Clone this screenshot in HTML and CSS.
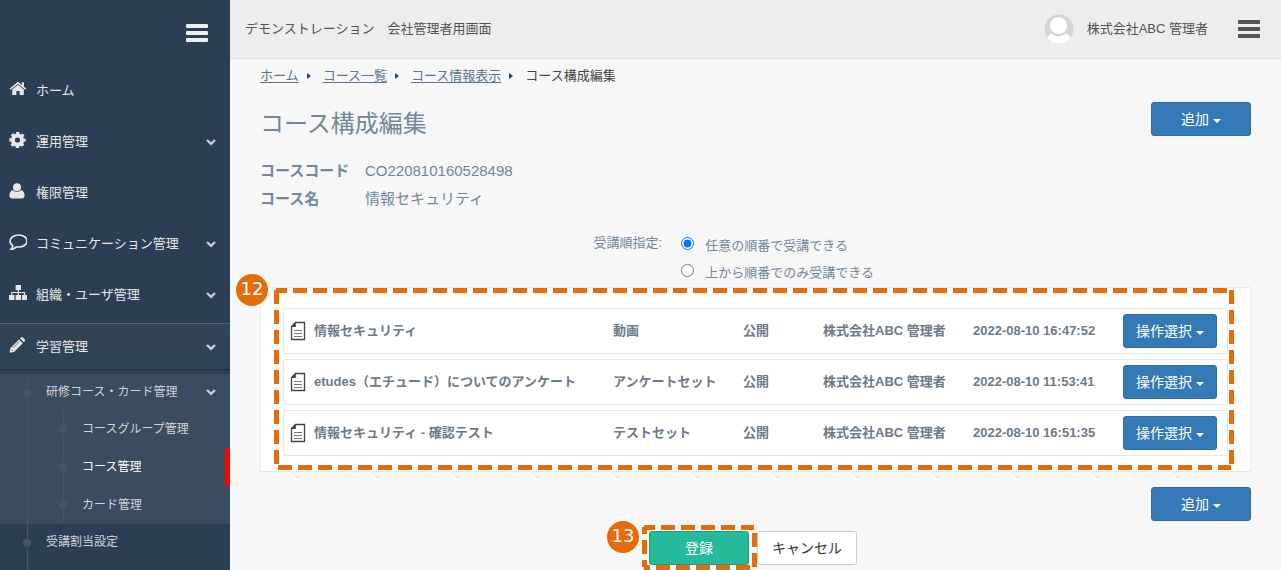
FILE: index.html
```html
<!doctype html>
<html lang="ja">
    <head>
        <meta charset="utf-8">
        <meta name="viewport" content="width=device-width, initial-scale=1">
        <title>コース構成編集</title>
        <link rel="stylesheet" href="styles.css">
    </head>
    <body>
        <svg class="defs" aria-hidden="true">
            <symbol id="chevron" viewBox="0 0 10 8"><path d="M1 2 L5 5.8 L9 2" fill="none" stroke="currentColor" stroke-width="2.4"/></symbol>
            <symbol id="doc" viewBox="0 0 16 20">
                <path d="M5.5 1.5 H14.5 V18.5 H1.5 V5.5 Z" fill="#fff" stroke="#444" stroke-width="1.3"/>
                <path d="M1 6 L5.8 1 V6 Z" fill="#444"/>
                <path d="M4 9.5 H12 M4 12.5 H12 M4 15.5 H12" stroke="#777" stroke-width="1"/>
            </symbol>
        </svg>

        <nav class="sidebar">
            <div class="sidebar-top">
                <button class="bars" type="button" aria-label="メニュー"><span></span><span></span><span></span></button>
            </div>
            <ul class="menu">
                <li>
                    <a href="#">
                        <svg class="icon" viewBox="0 0 18 16"><path d="M9 3.8 L14.8 8.6 V13.5 Q14.8 14 14.3 14 H10.6 V10 H7.4 V14 H3.7 Q3.2 14 3.2 13.5 V8.6 Z" fill="currentColor"/><path d="M1.2 8.2 L9 1.8 L16.8 8.2" fill="none" stroke="currentColor" stroke-width="1.5"/><path d="M12.8 1.2 H15 V6.5 L12.8 4.6 Z" fill="currentColor"/></svg>
                        ホーム
                    </a>
                </li>
                <li>
                    <a href="#">
                        <svg class="icon" viewBox="0 0 18 16"><circle cx="8.5" cy="8" r="4.6" fill="none" stroke="currentColor" stroke-width="4"/><circle cx="8.5" cy="8" r="7" fill="none" stroke="currentColor" stroke-width="2.4" stroke-dasharray="3.2 2.3" stroke-dashoffset="1.6"/></svg>
                        運用管理
                        <svg class="chevron"><use href="#chevron"/></svg>
                    </a>
                </li>
                <li>
                    <a href="#">
                        <svg class="icon" viewBox="0 0 18 16"><circle cx="8" cy="4.2" r="4" fill="currentColor"/><path d="M4 7.2 Q8 10.6 12 7.2 Q15.6 7.8 15.6 12.6 Q15.6 15.4 13 15.4 H3 Q.4 15.4 .4 12.6 Q.4 7.8 4 7.2 Z" fill="currentColor"/></svg>
                        権限管理
                    </a>
                </li>
                <li>
                    <a href="#">
                        <svg class="icon" viewBox="0 0 18 16"><path d="M9.8 1 C14.6 1 18 3.6 18 7 C18 10.4 14.6 13 9.8 13 Q8.6 13 7.6 12.8 Q5.4 15 2 15.4 Q3.7 13.8 3.9 11.6 Q1 9.8 1 7 C1 3.6 5 1 9.8 1 Z" fill="none" stroke="currentColor" stroke-width="1.7"/></svg>
                        コミュニケーション管理
                        <svg class="chevron"><use href="#chevron"/></svg>
                    </a>
                </li>
                <li>
                    <a href="#">
                        <svg class="icon" viewBox="0 0 18 16"><path d="M6.6 0 H12 V5 H6.6 Z M0 10 H5.4 V15 H0 Z M6.6 10 H12 V15 H6.6 Z M13 10 H18 V15 H13 Z" fill="currentColor"/><path d="M9.3 5 V10 M2.7 10 V7.5 H15.5 V10" fill="none" stroke="currentColor" stroke-width="1.2"/></svg>
                        組織・ユーザ管理
                        <svg class="chevron"><use href="#chevron"/></svg>
                    </a>
                </li>
                <li class="active">
                    <a href="#">
                        <svg class="icon" viewBox="0 0 18 16"><path d="M10 2.4 L13.8 6.2 L5 15 L.6 15.8 L1.2 11.2 Z M11 1.4 L12 .5 Q13 -.3 14 .6 L15.6 2.2 Q16.5 3.2 15.7 4.2 L14.8 5.2 Z" fill="currentColor"/><path d="M2 12.4 L3.8 14.2 M4 10.8 L10.4 4.4" stroke="#2f4457" stroke-width=".7"/></svg>
                        学習管理
                        <svg class="chevron"><use href="#chevron"/></svg>
                    </a>
                    <ul class="sub-menu">
                        <li class="open">
                            <a href="#">研修コース・カード管理 <svg class="chevron"><use href="#chevron"/></svg></a>
                            <ul class="sub-menu nested">
                                <li><a href="#">コースグループ管理</a></li>
                                <li class="current"><a href="#">コース管理</a></li>
                                <li><a href="#">カード管理</a></li>
                            </ul>
                        </li>
                        <li><a href="#">受講割当設定</a></li>
                    </ul>
                </li>
            </ul>
        </nav>

        <div class="page">
            <header class="top-nav">
                <span>デモンストレーション　会社管理者用画面</span>
                <div class="user">
                    <svg class="avatar" viewBox="0 0 30 30">
                        <clipPath id="round"><circle cx="15" cy="15" r="14.5"/></clipPath>
                        <g clip-path="url(#round)">
                            <path d="M0 0 H30 V30 H0 Z" fill="#d5d5d5"/>
                            <circle cx="14.5" cy="11.5" r="8.6" fill="#fff"/>
                            <path d="M2 30 Q3 21 7 19.6 Q14.5 25 22 19.6 Q27 21 28 30 Z" fill="#fff"/>
                        </g>
                    </svg>
                    <span>株式会社ABC 管理者</span>
                    <button class="bars dark" type="button" aria-label="ユーザメニュー"><span></span><span></span><span></span></button>
                </div>
            </header>

            <main class="content">
                <ol class="breadcrumb">
                    <li><a href="#">ホーム</a></li>
                    <li><a href="#">コース一覧</a></li>
                    <li><a href="#">コース情報表示</a></li>
                    <li>コース構成編集</li>
                </ol>

                <div class="title-row">
                    <h1>コース構成編集</h1>
                    <button class="btn btn-primary" type="button">追加 <i class="caret"></i></button>
                </div>

                <dl class="course-info">
                    <dt>コースコード</dt><dd>CO220810160528498</dd>
                    <dt>コース名</dt><dd>情報セキュリティ</dd>
                </dl>

                <form>
                    <div class="order" role="radiogroup" aria-labelledby="order-label">
                        <span id="order-label" class="order-label">受講順指定:</span>
                        <div class="order-options">
                            <div><input type="radio" name="order" id="order-any" checked><label for="order-any">任意の順番で受講できる</label></div>
                            <div><input type="radio" name="order" id="order-top"><label for="order-top">上から順番でのみ受講できる</label></div>
                        </div>
                    </div>

                    <div class="panel">
                        <table>
                            <colgroup>
                                <col>
                                <col class="col-type">
                                <col class="col-status">
                                <col class="col-person">
                                <col class="col-date">
                                <col class="col-action">
                            </colgroup>
                            <tbody>
                                <tr>
                                    <td><div class="name"><svg class="doc"><use href="#doc"/></svg>情報セキュリティ</div></td>
                                    <td>動画</td>
                                    <td>公開</td>
                                    <td>株式会社ABC 管理者</td>
                                    <td>2022-08-10 16:47:52</td>
                                    <td><button class="btn btn-primary btn-row" type="button">操作選択 <i class="caret"></i></button></td>
                                </tr>
                                <tr>
                                    <td><div class="name"><svg class="doc"><use href="#doc"/></svg>etudes（エチュード）についてのアンケート</div></td>
                                    <td>アンケートセット</td>
                                    <td>公開</td>
                                    <td>株式会社ABC 管理者</td>
                                    <td>2022-08-10 11:53:41</td>
                                    <td><button class="btn btn-primary btn-row" type="button">操作選択 <i class="caret"></i></button></td>
                                </tr>
                                <tr>
                                    <td><div class="name"><svg class="doc"><use href="#doc"/></svg>情報セキュリティ - 確認テスト</div></td>
                                    <td>テストセット</td>
                                    <td>公開</td>
                                    <td>株式会社ABC 管理者</td>
                                    <td>2022-08-10 16:51:35</td>
                                    <td><button class="btn btn-primary btn-row" type="button">操作選択 <i class="caret"></i></button></td>
                                </tr>
                            </tbody>
                        </table>
                        <div class="frame frame-list">
                            <svg>
                                <line x1="0" y1="0" x2="100%" y2="0" stroke-dashoffset="3"/>
                                <line x1="0" y1="0" x2="0" y2="100%"/>
                                <line x1="100%" y1="0" x2="100%" y2="100%"/>
                                <line x1="0" y1="100%" x2="100%" y2="100%" stroke-dashoffset="18"/>
                            </svg>
                            <span class="step">12</span>
                        </div>
                    </div>

                    <div class="add-row">
                        <button class="btn btn-primary" type="button">追加 <i class="caret"></i></button>
                    </div>

                    <div class="actions">
                        <div class="submit">
                            <button class="btn btn-success" type="submit">登録</button>
                            <div class="frame frame-submit">
                                <svg>
                                    <line x1="0" y1="0" x2="100%" y2="0" stroke-dashoffset="3"/>
                                    <line x1="0" y1="0" x2="0" y2="100%" stroke-dashoffset="7"/>
                                    <line x1="100%" y1="0" x2="100%" y2="100%" stroke-dashoffset="14"/>
                                    <line x1="0" y1="100%" x2="100%" y2="100%" stroke-dashoffset="8"/>
                                </svg>
                                <span class="step">13</span>
                            </div>
                        </div>
                        <button class="btn btn-default" type="button">キャンセル</button>
                    </div>
                </form>
            </main>
        </div>
    </body>
</html>
```

FILE: styles.css
```css
:root {
  --navy: #2a3f54;
  --line: #425668;
  --text: #73879c;
  --mark: #e46c0a;
}

* {
  margin: 0;
  padding: 0;
  box-sizing: border-box;
}

body {
  display: flex;
  min-height: 100vh;
  font: 13px/20px "Liberation Sans", "Noto Sans CJK JP", sans-serif;
  color: var(--text);
  background: #f7f7f7;
}

ul,
ol {
  list-style: none;
}

button {
  font-family: inherit;
  cursor: pointer;
}

.defs {
  position: absolute;
  width: 0;
  height: 0;
}

/* sidebar */
.sidebar {
  display: flex;
  flex-direction: column;
  flex: 0 0 230px;
  background: var(--navy);
}

.sidebar-top {
  display: flex;
  justify-content: flex-end;
  padding: 24px 22px 26px 0;
}

.bars {
  display: flex;
  flex-direction: column;
  gap: 3px;
  width: 22px;
  border: 0;
  background: none;
  color: #ecf0f1;
}

.bars span {
  height: 4px;
  width: 100%;
  border-radius: 1px;
  background: currentColor;
}

.bars.dark {
  color: #515356;
}

.menu {
  display: flex;
  flex-direction: column;
  flex: 1;
}

.menu a {
  display: flex;
  align-items: center;
  color: #e7e7e7;
  text-decoration: none;
}

.menu > li {
  margin-bottom: 6px;
}

.menu > li > a {
  height: 45px;
  padding: 0 14px 0 9px;
}

.menu > li.active {
  display: flex;
  flex-direction: column;
  flex: 1;
  margin-bottom: 0;
}

.menu > li.active > a {
  flex: none;
  height: 47px;
  border-top: 1px solid #566676;
  border-bottom: 1px solid #20303f;
  background: linear-gradient(#334556, #2c4257);
}

.icon {
  width: 18px;
  height: 16px;
  margin: 0 9px 4px 0;
}

.chevron {
  width: 10px;
  height: 8px;
  margin-left: auto;
  color: #c4cfda;
}

.sub-menu {
  position: relative;
  flex: 1;
  margin-top: 4px;
}

.sub-menu a {
  position: relative;
  height: 36px;
  padding: 0 14px 0 46px;
  font-size: 12px;
  color: #d0d4d8;
}

.sub-menu::before {
  content: "";
  position: absolute;
  top: 0;
  bottom: 0;
  left: 27px;
  width: 1px;
  background: var(--line);
}

.sub-menu a::before {
  content: "";
  position: absolute;
  left: 23px;
  top: 15px;
  width: 8px;
  height: 8px;
  border-radius: 50%;
  background: var(--line);
}

.sub-menu .open {
  background: #3a4c5f;
}

.nested {
  margin-top: 0;
}

.nested::before {
  left: 63px;
}

.sub-menu .nested a {
  height: 38px;
  padding-left: 82px;
}

.sub-menu .nested a::before {
  left: 59px;
}

.nested .current a {
  color: #fff;
  border-right: 5px solid #f00;
}

/* top bar */
.page {
  flex: 1;
  min-width: 0;
}

.top-nav {
  display: flex;
  justify-content: space-between;
  align-items: center;
  height: 59px;
  padding: 0 21px 0 15px;
  color: #515356;
  background: #ededed;
  border-bottom: 1px solid #d9dee4;
}

.user {
  display: flex;
  align-items: center;
}

.avatar {
  width: 30px;
  height: 30px;
  margin-right: 13px;
}

.user .bars {
  margin-left: 30px;
}

/* content */
.content {
  padding: 7px 30px 5px;
}

.breadcrumb {
  display: flex;
  color: #444;
}

.breadcrumb a {
  color: #5a738e;
  text-underline-offset: 2px;
}

.breadcrumb li + li::before {
  content: "";
  display: inline-block;
  margin: 0 12px 1px 8px;
  border: 3px solid transparent;
  border-left: 4px solid #1a4480;
  border-right: 0;
}

.title-row {
  display: flex;
  justify-content: space-between;
  align-items: flex-start;
  margin-top: 16px;
}

h1 {
  padding-top: 4px;
  font-size: 24px;
  line-height: 36px;
  font-weight: 400;
}

.course-info {
  display: grid;
  grid-template-columns: 105px 1fr;
  margin-top: 15px;
  font-size: 15px;
  line-height: 28px;
}

.course-info dt {
  font-weight: bold;
}

.order {
  display: flex;
  margin-top: 20px;
}

.order-label {
  flex: 0 0 42%;
  padding-right: 14px;
  text-align: right;
}

.order-options > div {
  display: flex;
  align-items: flex-start;
  height: 27px;
  padding-left: 5px;
}

.order-options input {
  width: 13px;
  height: 13px;
  margin: 4px 11px 0 0;
}

.order-options label {
  padding-top: 3px;
}

.panel {
  position: relative;
  padding: 15px 22px 10px;
  background: #fff;
  border: 1px solid #e6e9ed;
}

table {
  width: 100%;
  table-layout: fixed;
  border-collapse: separate;
  border-spacing: 0 5px;
  font-weight: bold;
  color: #6c7a89;
}

.col-person,
.col-date {
  width: 150px;
}

.col-type {
  width: 130px;
}

.col-status {
  width: 80px;
}

.col-action {
  width: 105px;
}

td {
  height: 46px;
  border: solid #e5e5e5;
  border-width: 1px 0;
  white-space: nowrap;
}

td:first-child {
  padding-left: 6px;
  border-left-width: 1px;
  border-radius: 3px 0 0 3px;
}

td:last-child {
  border-right-width: 1px;
  border-radius: 0 3px 3px 0;
}

.name {
  display: flex;
  align-items: center;
}

.doc {
  width: 16px;
  height: 20px;
  margin-right: 8px;
}

.btn {
  display: inline-flex;
  align-items: center;
  justify-content: center;
  width: 100px;
  height: 34px;
  padding-bottom: 2px;
  font-size: 14px;
  border: 1px solid;
  border-radius: 3px;
}

.btn-primary {
  color: #fff;
  background: #337ab7;
  border-color: #2e6da4;
}

.btn-success {
  color: #fff;
  background: #26b99a;
  border-color: #169f85;
}

.btn-default {
  color: #333;
  background: #fff;
  border-color: #ccc;
}

.btn-row {
  display: flex;
  width: 94px;
}

.caret {
  margin: 5px 0 0 4px;
  border: 4px solid transparent;
  border-top-color: currentColor;
  border-bottom: 0;
}

.add-row {
  display: flex;
  justify-content: flex-end;
  margin-top: 15px;
}

.actions {
  display: flex;
  justify-content: center;
  gap: 8px;
  margin-top: 10px;
  padding-right: 5px;
}

.submit {
  position: relative;
}

.submit .btn {
  display: flex;
}

/* numbered callouts */
.frame {
  position: absolute;
  pointer-events: none;
}

.frame svg {
  display: block;
  width: 100%;
  height: 100%;
  overflow: visible;
}

.frame line {
  stroke: var(--mark);
  stroke-width: 5;
  stroke-dasharray: 14 6;
  shape-rendering: crispEdges;
}

.frame-list {
  inset: 2px 19px 4px 15px;
}

.frame-submit {
  inset: -4px -5px -2px -5px;
}

.step {
  position: absolute;
  top: -16px;
  left: -40px;
  width: 32px;
  height: 32px;
  border-radius: 50%;
  font: 18px/30px "DejaVu Sans", sans-serif;
  text-align: center;
  color: #fff;
  background: var(--mark);
}

.frame-submit .step {
  top: -6px;
  left: -37px;
}
```
